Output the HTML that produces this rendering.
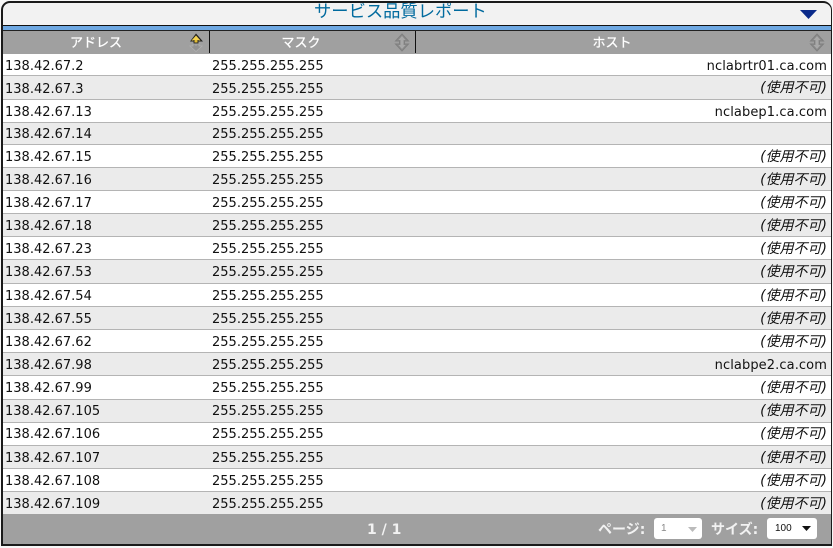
<!DOCTYPE html>
<html><head><meta charset="utf-8"><style>
html,body{margin:0;padding:0;background:#f7f7f7;width:833px;height:548px;overflow:hidden}
*{box-sizing:border-box}
#w{position:absolute;left:1px;top:1px;width:831px;height:545px;border:2px solid #1a1a1a;border-radius:9px 9px 0 0;border-right-width:1px;overflow:hidden;background:#f2f2f2;font:13px "DejaVu Sans","Noto Sans CJK JP",sans-serif;color:#111}
#t{position:absolute;left:311px;top:-3px;white-space:nowrap;font:17.300px/24px "DejaVu Sans","Noto Sans CJK JP",sans-serif;color:#006a9e}
#band{position:absolute;left:0;top:22px;width:100%;height:6px;background:#6ea8e2;border-top:1px solid #111;border-bottom:1px solid #222}
#h{position:absolute;left:0;top:28px;width:100%;height:23px;background:#a0a0a0;color:#fff;font-size:13px;line-height:26px;-webkit-text-stroke:.25px #fff}
#h div{position:absolute;top:0;text-align:center}
.sep{position:absolute;top:0;width:1px;height:22px;background:#111}
.r{position:absolute;left:0;width:100%;white-space:nowrap}
.r span{position:absolute;top:2px}
.a{left:2px}.m{left:209px}
.n{right:4px;letter-spacing:.1px}
.r span.u{right:4px;top:1px;font-style:italic;font-size:14px}
.g{background:#ebebeb}.wh{background:#fff}
.l{border-bottom:1px solid #b4b4b4}
#f{position:absolute;left:0;top:511px;width:100%;height:30px;background:#a0a0a0;color:#f2f2f2;font-weight:bold;font-size:14px;line-height:33px}
#f span{position:absolute;top:0}
.sel{position:absolute;top:4px;height:21px;background:#fff;border-radius:3px;font:10px/21px "Liberation Sans",sans-serif;color:#111;padding-left:7px}
.ic{position:absolute;top:2px}
</style></head><body><div id="w">
<div id="t">サービス品質レポート</div>
<svg style="position:absolute;left:796px;top:6px" width="20" height="11"><path d="M1 1H18L9.500 10Z" fill="#0a2a8a"/></svg>
<div id="band"></div>
<div id="h">
<div style="left:0;width:186px">アドレス</div>
<div style="left:205px;width:186px">マスク</div>
<div style="left:415px;width:388px">ホスト</div>
<div class="sep" style="left:206px"></div><div class="sep" style="left:412px"></div>
<svg class="ic" style="left:185px" width="16" height="19"><path d="M8 10V13M5 11H11V13H14L8 18.500 2 13H5Z" fill="#929292" stroke="#b0b0b0" stroke-width=".8"/><path d="M8 .5L15 8.500H2Z" fill="#222"/><path d="M8 2.500L12.500 7.500H3.500Z" fill="#f3d24f"/><rect x="5.500" y="7" width="5" height="3.500" fill="#2c2c2c"/><rect x="6.500" y="7" width="3" height="2.500" fill="#e2bd35"/></svg>
<svg class="ic" style="left:391px" width="16" height="19"><path d="M8 1L14.500 8H10.500V11H14.500L8 18 1.500 11H5.500V8H1.500Z" fill="#8a8a8a" stroke="#808080" stroke-width="1"/><path d="M8 3L11.500 7H4.500ZM8 16L11.500 12H4.500ZM6.500 7H9.500V12H6.500Z" fill="#a8a8a8"/></svg>
<svg class="ic" style="left:806px" width="16" height="19"><path d="M8 1L14.500 8H10.500V11H14.500L8 18 1.500 11H5.500V8H1.500Z" fill="#8a8a8a" stroke="#808080" stroke-width="1"/><path d="M8 3L11.500 7H4.500ZM8 16L11.500 12H4.500ZM6.500 7H9.500V12H6.500Z" fill="#a8a8a8"/></svg>
</div>
<div class="r wh l" style="top:51px;height:22px;line-height:21px"><span class="a">138.42.67.2</span><span class="m">255.255.255.255</span><span class="n">nclabrtr01.ca.com</span></div>
<div class="r g l" style="top:73px;height:24px;line-height:23px"><span class="a">138.42.67.3</span><span class="m">255.255.255.255</span><span class="u">(使用不可)</span></div>
<div class="r wh l" style="top:97px;height:23px;line-height:22px"><span class="a">138.42.67.13</span><span class="m">255.255.255.255</span><span class="n">nclabep1.ca.com</span></div>
<div class="r g l" style="top:120px;height:22px;line-height:20px"><span class="a">138.42.67.14</span><span class="m">255.255.255.255</span></div>
<div class="r wh l" style="top:142px;height:23px;line-height:22px"><span class="a">138.42.67.15</span><span class="m">255.255.255.255</span><span class="u">(使用不可)</span></div>
<div class="r g l" style="top:165px;height:23px;line-height:22px"><span class="a">138.42.67.16</span><span class="m">255.255.255.255</span><span class="u">(使用不可)</span></div>
<div class="r wh l" style="top:188px;height:23px;line-height:22px"><span class="a">138.42.67.17</span><span class="m">255.255.255.255</span><span class="u">(使用不可)</span></div>
<div class="r g l" style="top:211px;height:23px;line-height:22px"><span class="a">138.42.67.18</span><span class="m">255.255.255.255</span><span class="u">(使用不可)</span></div>
<div class="r wh l" style="top:234px;height:23px;line-height:22px"><span class="a">138.42.67.23</span><span class="m">255.255.255.255</span><span class="u">(使用不可)</span></div>
<div class="r g l" style="top:257px;height:24px;line-height:22px"><span class="a">138.42.67.53</span><span class="m">255.255.255.255</span><span class="u">(使用不可)</span></div>
<div class="r wh l" style="top:281px;height:23px;line-height:22px"><span class="a">138.42.67.54</span><span class="m">255.255.255.255</span><span class="u">(使用不可)</span></div>
<div class="r g l" style="top:304px;height:23px;line-height:22px"><span class="a">138.42.67.55</span><span class="m">255.255.255.255</span><span class="u">(使用不可)</span></div>
<div class="r wh l" style="top:327px;height:23px;line-height:22px"><span class="a">138.42.67.62</span><span class="m">255.255.255.255</span><span class="u">(使用不可)</span></div>
<div class="r g l" style="top:350px;height:23px;line-height:22px"><span class="a">138.42.67.98</span><span class="m">255.255.255.255</span><span class="n">nclabpe2.ca.com</span></div>
<div class="r wh l" style="top:373px;height:24px;line-height:22px"><span class="a">138.42.67.99</span><span class="m">255.255.255.255</span><span class="u">(使用不可)</span></div>
<div class="r g l" style="top:397px;height:23px;line-height:20px"><span class="a">138.42.67.105</span><span class="m">255.255.255.255</span><span class="u">(使用不可)</span></div>
<div class="r wh l" style="top:420px;height:23px;line-height:20px"><span class="a">138.42.67.106</span><span class="m">255.255.255.255</span><span class="u">(使用不可)</span></div>
<div class="r g l" style="top:443px;height:23px;line-height:22px"><span class="a">138.42.67.107</span><span class="m">255.255.255.255</span><span class="u">(使用不可)</span></div>
<div class="r wh l" style="top:466px;height:23px;line-height:22px"><span class="a">138.42.67.108</span><span class="m">255.255.255.255</span><span class="u">(使用不可)</span></div>
<div class="r g" style="top:489px;height:22px;line-height:22px"><span class="a">138.42.67.109</span><span class="m">255.255.255.255</span><span class="u">(使用不可)</span></div>
<div id="f">
<span style="left:364px">1 / 1</span>
<span style="left:595px">ページ:</span>
<div class="sel" style="left:651px;width:48px;color:#888">1<svg style="position:absolute;left:34px;top:9px" width="9" height="5"><path d="M0 0H9L4.500 5Z" fill="#bbb"/></svg></div>
<span style="left:708px">サイズ:</span>
<div class="sel" style="left:764px;width:50px;padding-left:8px">100<svg style="position:absolute;left:35px;top:8px" width="9" height="5"><path d="M0 0H9L4.500 5Z" fill="#111"/></svg></div>
</div>
</div></body></html>
